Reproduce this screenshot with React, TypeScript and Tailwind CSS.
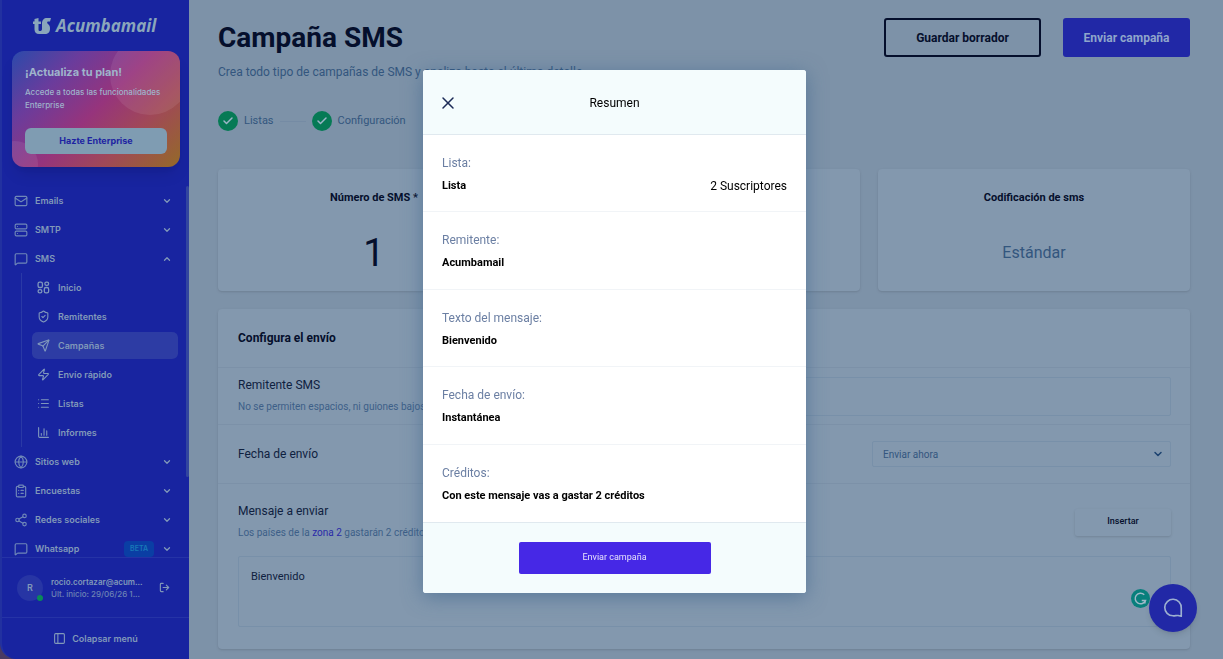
import type { ReactNode } from 'react';
import {
  ChartColumn,
  Check,
  ChevronDown,
  ChevronUp,
  ClipboardList,
  Globe,
  List,
  LogOut,
  Mail,
  MessageSquare,
  PanelLeft,
  Send,
  Server,
  Share2,
  ShieldCheck,
  X,
  Zap,
} from 'lucide-react';
import type { LucideIcon } from 'lucide-react';

interface MenuItem {
  label: string;
  icon: LucideIcon | typeof DashboardIcon;
  open?: boolean;
  active?: boolean;
  badge?: string;
}

interface SummaryItem {
  label: string;
  value: string;
  extra?: string;
}

function DashboardIcon({ className }: { className?: string }) {
  return (
    <svg viewBox="0 0 24 24" fill="none" stroke="currentColor" strokeWidth="2.4" className={className}>
      <rect x="2" y="2" width="8" height="10" rx="3" />
      <rect x="14.500" y="2" width="7" height="6" rx="3" />
      <rect x="2" y="16" width="7" height="6" rx="3" />
      <rect x="13.500" y="12" width="8" height="10" rx="3" />
    </svg>
  );
}

const topItems: MenuItem[] = [
  { label: 'Emails', icon: Mail },
  { label: 'SMTP', icon: Server },
  { label: 'SMS', icon: MessageSquare, open: true },
];

const smsItems: MenuItem[] = [
  { label: 'Inicio', icon: DashboardIcon },
  { label: 'Remitentes', icon: ShieldCheck },
  { label: 'Campañas', icon: Send, active: true },
  { label: 'Envío rápido', icon: Zap },
  { label: 'Listas', icon: List },
  { label: 'Informes', icon: ChartColumn },
];

const bottomItems: MenuItem[] = [
  { label: 'Sitios web', icon: Globe },
  { label: 'Encuestas', icon: ClipboardList },
  { label: 'Redes sociales', icon: Share2 },
  { label: 'Whatsapp', icon: MessageSquare, badge: 'BETA' },
];

const summary: SummaryItem[] = [
  { label: 'Lista:', value: 'Lista', extra: '2 Suscriptores' },
  { label: 'Remitente:', value: 'Acumbamail' },
  { label: 'Texto del mensaje:', value: 'Bienvenido' },
  { label: 'Fecha de envío:', value: 'Instantánea' },
  { label: 'Créditos:', value: 'Con este mensaje vas a gastar 2 créditos' },
];

function MenuButton({ item }: { item: MenuItem }) {
  const Icon = item.icon;
  const Chevron = item.open ? ChevronUp : ChevronDown;
  return (
    <button type="button" className="flex h-[29px] w-full items-center pr-[14px] pl-[12px] text-left">
      <Icon className="h-[14px] w-[14px] shrink-0 text-[#6f87b8]" />
      <span className="ml-[7px] flex-1">{item.label}</span>
      {item.badge && (
        <span className="mr-[8px] rounded-sm bg-[#0a3ea4] px-1.5 py-[3px] text-[7px] leading-[10px] text-[#1878b8]">
          {item.badge}
        </span>
      )}
      <Chevron className="h-[10px] w-[10px]" strokeWidth={3} />
    </button>
  );
}

function Sidebar() {
  return (
    <aside className="flex h-screen w-[189px] shrink-0 flex-col bg-[#4a3a62] font-['Inter',sans-serif] text-[9px] font-semibold text-[#8199b9]">
      <div className="flex min-h-0 flex-1 flex-col rounded-bl-2xl border-l-2 border-[#2231a0] bg-[#1824a0]">
        <a href="#inicio" className="flex items-center gap-[5px] pt-[13px] pl-[31px] text-[#8aa6bb]">
          <svg viewBox="0 0 36 34" className="h-[18px] w-[18px]" fill="currentColor">
            <path d="M3 3l8-2v7h5v5h-5v11c0 2 1 3 3 3s4-1 4-4V12C18 5 22 1 28 1h8l-2 7h-4c-2 0-2 3-1 4 4 3 5 6 5 10 0 8-4 11-10 11H12c-6 0-9-4-9-9V13H0V8h3z" />
          </svg>
          <span className="font-['Open_Sans',sans-serif] text-[17px] leading-[26px] font-bold italic">Acumbamail</span>
        </a>

        <section className="relative mt-[12px] mr-[9px] ml-[10px] overflow-hidden rounded-xl bg-linear-[135deg,#2b4aab_0%,#6a3c9c_25%,#96347c_50%,#a04858_72%,#946a28_100%] px-[13px] pt-[13px] pb-[13px] text-[#9fb4cb] shadow-lg">
          <div className="absolute -top-[16px] right-[-10px] h-[80px] w-[80px] rounded-full bg-white/8" />
          <div className="absolute -bottom-[20px] -left-[20px] h-[46px] w-[46px] rounded-full bg-white/8" />
          <h2 className="relative text-[11px] leading-4 font-bold">¡Actualiza tu plan!</h2>
          <p className="relative mt-1.5 text-[8px] leading-[13px] font-medium">
            Accede a todas las funcionalidades Enterprise
          </p>
          <button
            type="button"
            className="relative mt-4 h-[26px] w-full rounded-md bg-[#7f9cb2] text-[9px] font-bold text-[#1e24a2]"
          >
            Hazte Enterprise
          </button>
        </section>

        <div className="mt-[19px] flex min-h-0 flex-1 overflow-hidden">
          <nav className="min-w-0 flex-1">
            {topItems.map((item) => (
              <MenuButton key={item.label} item={item} />
            ))}
            <div className="ml-[19px] border-l border-[#2a39a6] pr-[8px] pl-[10px]">
              {smsItems.map((item) => (
                <a
                  key={item.label}
                  href="#sms"
                  className={`flex h-[29px] items-center gap-[8px] border-y border-transparent bg-clip-padding rounded-md pl-[5px] ${item.active ? 'bg-[#2d3ca4]' : ''}`}
                >
                  <item.icon className="h-[13px] w-[13px] text-[#7f97bc]" />
                  {item.label}
                </a>
              ))}
            </div>
            {bottomItems.map((item) => (
              <MenuButton key={item.label} item={item} />
            ))}
          </nav>
          <div className="h-[291px] w-[3px] rounded-full bg-[#32459f]" />
        </div>

        <div className="flex h-[60px] shrink-0 items-center border-t border-[#2533a6] pr-[19px] pl-[15px]">
          <div className="relative flex h-[26px] w-[26px] shrink-0 items-center justify-center rounded-full bg-[#2735a4]">
            R
            <span className="absolute right-0 bottom-0 h-[6px] w-[6px] rounded-full bg-[#0a8a58]" />
          </div>
          <div className="ml-[8px] min-w-0 flex-1 text-[8px] leading-3">
            <p className="truncate">rocio.cortazar@acum...</p>
            <p className="truncate font-medium text-[#6c83b4]">Últ. inicio: 29/06/26 1...</p>
          </div>
          <button type="button" aria-label="Salir">
            <LogOut className="h-[11px] w-[11px]" strokeWidth={2.5} />
          </button>
        </div>
        <button
          type="button"
          className="flex h-[42px] shrink-0 items-center justify-center gap-1.5 border-t border-[#2533a6]"
        >
          <PanelLeft className="h-[13px] w-[13px]" />
          Colapsar menú
        </button>
      </div>
    </aside>
  );
}

function Step({ label }: { label: string }) {
  return (
    <div className="flex items-center gap-1.5 text-[11px] leading-5 text-[#33567e]">
      <span className="flex h-5 w-5 items-center justify-center rounded-full bg-[#067a55] text-[#9db5c8]">
        <Check className="h-3 w-3" strokeWidth={3} />
      </span>
      {label}
    </div>
  );
}

function StatCard({ title, children }: { title?: string; children?: ReactNode }) {
  return (
    <div className="flex h-[122px] flex-col items-center rounded-sm bg-[#8398ae] pt-[21px] shadow-sm">
      {title && <h3 className="text-[11px] leading-4 font-bold text-[#050f2c]">{title}</h3>}
      {children}
    </div>
  );
}

function SendSettings() {
  return (
    <form className="mt-[18px] rounded-sm bg-[#8398ae] text-[#0f2140] shadow-sm">
      <h2 className="border-b border-[#7c91a8] px-5 pt-[21px] pb-5 text-xs leading-[17px] font-bold text-[#050f2c]">
        Configura el envío
      </h2>
      <div className="flex items-center justify-between border-b border-[#7c91a8] pr-[19px] pl-5 py-2">
        <div className="flex-1">
          <label htmlFor="sender" className="block text-xs leading-[18px]">
            Remitente SMS
          </label>
          <p className="mt-1 w-[186px] truncate text-[10px] leading-[18px] text-[#3d5f88] [text-overflow:clip]">
            No se permiten espacios, ni guiones bajos
          </p>
        </div>
        <input
          id="sender"
          className="h-[39px] w-[598px] rounded-xs border border-[#7890a9] bg-transparent px-3 text-[11px]"
        />
      </div>
      <div className="flex items-center justify-between border-b border-[#7c91a8] py-4 pr-[19px] pl-5">
        <label htmlFor="date" className="text-xs">
          Fecha de envío
        </label>
        <div className="relative flex w-[299px] items-center">
          <select
            id="date"
            className="h-[26px] w-full appearance-none rounded-xs border border-[#7890a9] bg-transparent px-[10px] text-[10px] text-[#33567e]"
          >
            <option>Enviar ahora</option>
          </select>
          <ChevronDown className="pointer-events-none absolute right-[7px] h-3 w-3 text-[#1c4270]" strokeWidth={3} />
        </div>
      </div>
      <div className="pt-[18px] pr-[19px] pb-[22px] pl-5">
        <div className="flex items-center justify-between">
          <div>
            <label htmlFor="message" className="block text-xs leading-[18px]">
              Mensaje a enviar
            </label>
            <p className="mt-1 text-[10px] leading-[18px] text-[#3d5f88]">
              Los países de la{' '}
              <a href="#zona-2" className="text-[#2a2aa8]">
                zona 2
              </a>{' '}
              gastarán 2 créditos
            </p>
          </div>
          <button
            type="button"
            className="h-[27px] w-[96px] rounded-xs bg-[#8398ae] text-[9px] font-medium text-[#050f2c] shadow-sm"
          >
            Insertar
          </button>
        </div>
        <textarea
          id="message"
          defaultValue="Bienvenido"
          className="mt-[14px] block h-[71px] w-full resize-none rounded-xs border border-[#7890a9] bg-transparent px-3 py-3 text-[11px] leading-4"
        />
      </div>
    </form>
  );
}

function SummaryDialog() {
  return (
    <div className="fixed inset-0 flex items-start justify-center pt-[70px] pl-[6px]">
      <div
        role="dialog"
        aria-labelledby="summary-title"
        className="w-[383px] overflow-hidden rounded-[3px] bg-white text-black shadow-[0_4px_20px_rgba(60,100,140,0.6)]"
      >
        <header className="grid h-[65px] grid-cols-[1fr_auto_1fr] items-center border-b border-[#e0e9ef] bg-[#f4fcfd] px-[19px] pt-px">
          <button type="button" aria-label="Cerrar" className="w-fit text-[#1c2b57]">
            <X className="-ml-1 h-5 w-5" strokeWidth={1.8} />
          </button>
          <h2 id="summary-title" className="text-xs">
            Resumen
          </h2>
        </header>
        <dl className="grid min-h-[387px] auto-rows-fr divide-y divide-[#f1f4f7]">
          {summary.map((item) => (
            <div key={item.label} className="px-[19px] pt-[18px]">
              <dt className="text-xs leading-5 text-[#6b7fa3]">{item.label}</dt>
              <dd className="mt-1 flex items-center justify-between text-[11px] leading-[18px] font-bold">
                {item.value}
                {item.extra && <span className="text-xs font-normal">{item.extra}</span>}
              </dd>
            </div>
          ))}
        </dl>
        <footer className="flex justify-center border-t border-[#e0e9ef] bg-[#f4fcfd] pt-[19px] pb-[19px]">
          <button type="button" className="h-8 w-[192px] rounded-xs bg-[#4628e6] text-[9px] text-[#e6e2fc]">
            Enviar campaña
          </button>
        </footer>
      </div>
    </div>
  );
}

export default function App() {
  return (
    <div className="flex h-screen overflow-hidden bg-[#7d92a8] font-['Roboto',sans-serif]">
      <Sidebar />

      <main className="min-w-0 flex-1 pr-[33px] pl-[29px]">
        <header className="flex items-start justify-between pt-[18px]">
          <div>
            <h1 className="text-[28px] leading-10 font-bold text-[#050f2c]">Campaña SMS</h1>
            <p className="mt-1 text-xs leading-5 text-[#33567e]">
              Crea todo tipo de campañas de SMS y analiza hasta el último detalle
            </p>
          </div>
          <div className="flex gap-[22px] text-xs font-bold">
            <button
              type="button"
              className="h-[39px] w-[157px] rounded-[3px] border-2 border-[#050f2c] text-[#050f2c]"
            >
              Guardar borrador
            </button>
            <button type="button" className="h-[39px] w-[127px] rounded-[3px] bg-[#2128a6] text-[#8fa5cb]">
              Enviar campaña
            </button>
          </div>
        </header>

        <div className="mt-[29px] flex items-center gap-1.5">
          <Step label="Listas" />
          <div className="h-px w-[26px] bg-[#758ba4]" />
          <Step label="Configuración" />
        </div>

        <div className="mt-[38px] grid grid-cols-3 gap-[18px]">
          <StatCard title="Número de SMS *">
            <p className="mt-[22px] text-[38px] leading-[50px] text-[#050f2c]">1</p>
          </StatCard>
          <StatCard />
          <StatCard title="Codificación de sms">
            <p className="mt-[37px] text-base leading-5 text-[#33567e]">Estándar</p>
          </StatCard>
        </div>

        <SendSettings />
      </main>

      <SummaryDialog />

      <div className="fixed right-[26px] bottom-[27px] flex items-start">
        <button
          type="button"
          aria-label="Revisar texto"
          className="mt-[5px] -mr-[1px] flex h-[19px] w-[19px] items-center justify-center rounded-full bg-[#087f7c] text-[#9fb9c8]"
        >
          <svg viewBox="0 0 24 24" className="h-[15px] w-[15px]" fill="none" stroke="currentColor" strokeWidth="2.4">
            <path d="M18 6a8.500 8.500 0 1 0 2 9h-6" />
            <path d="M19 20v-5" />
          </svg>
        </button>
        <button
          type="button"
          aria-label="Abrir chat"
          className="flex h-12 w-12 items-center justify-center rounded-full bg-[#2128a6] text-[#9db0d0] shadow-md"
        >
          <svg viewBox="0 0 24 24" className="h-[22px] w-[22px]" fill="none" stroke="currentColor" strokeWidth="1.8">
            <path d="M21 21v-9a9 9 0 1 0-9 8.500c2 .2 4-.6 5.500-.3z" strokeLinejoin="round" />
          </svg>
        </button>
      </div>
    </div>
  );
}
